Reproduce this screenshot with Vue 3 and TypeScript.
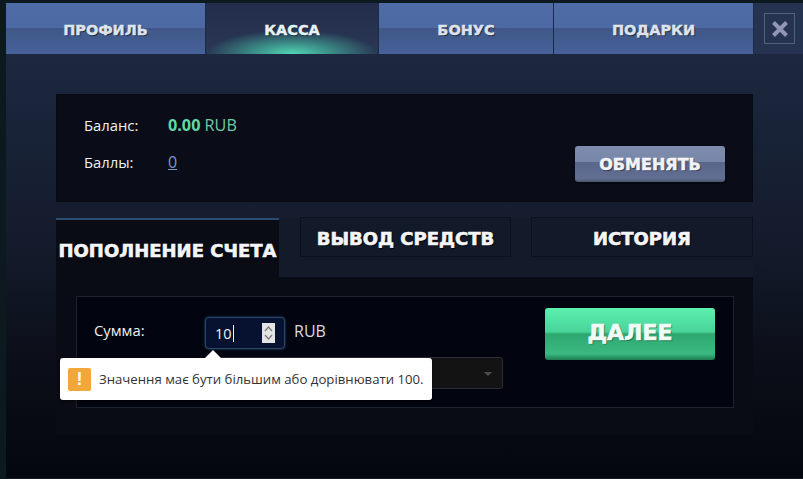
<template>
  <div class="page">
    <header class="top">
      <nav class="tabs">
        <div
          v-for="tab in mainTabs"
          :key="tab.label"
          :class="['tab', { active: tab.active }]"
          :style="{ width: tab.width + 'px' }"
        >
          {{ tab.label }}
        </div>
      </nav>
      <button class="close" type="button" aria-label="Закрыть">
        <svg width="20" height="20" viewBox="0 0 20 20">
          <path d="M3.5 3.5 16.5 16.5M16.5 3.5 3.5 16.5" stroke="#9196b4" stroke-width="4" fill="none" />
        </svg>
      </button>
    </header>

    <main class="body">
      <section class="balance">
        <div class="balance-grid">
          <span class="label">Баланс:</span>
          <span class="amount"><b>0.00</b> RUB</span>
          <span class="label">Баллы:</span>
          <a class="points">0</a>
        </div>
        <button class="exchange" type="button"><span>ОБМЕНЯТЬ</span></button>
      </section>

      <div class="subtabs">
        <div class="subtab current">ПОПОЛНЕНИЕ СЧЕТА</div>
        <div class="subtab first">ВЫВОД СРЕДСТВ</div>
        <div class="subtab second">ИСТОРИЯ</div>
      </div>

      <section class="panel">
        <div class="form">
          <div class="fields">
            <div class="row">
              <span class="label field-label">Сумма:</span>
              <div class="input">
                <span class="value">10</span><span class="caret"></span>
                <span class="spinner">
                  <svg width="13" height="20" viewBox="0 0 13 20">
                    <path d="M3 8 6.5 4 10 8M3 12 6.5 16 10 12" stroke="#7a7a7a" stroke-width="1.2" fill="none" />
                  </svg>
                </span>
              </div>
              <span class="currency">RUB</span>
            </div>
            <div class="select"><span class="arrow"></span></div>
          </div>
          <button class="next" type="button"><span>ДАЛЕЕ</span></button>

          <div class="tooltip">
            <span class="tip-arrow"></span>
            <span class="warn">!</span>
            <span class="tip-text">Значення має бути більшим або дорівнювати 100.</span>
          </div>
        </div>
      </section>
    </main>
  </div>
</template>

<script setup lang="ts">
const mainTabs = [
  { label: "ПРОФИЛЬ", width: 200, active: false },
  { label: "КАССА", width: 173, active: true },
  { label: "БОНУС", width: 175, active: false },
  { label: "ПОДАРКИ", width: 200, active: false },
];
</script>

<style>
html,
body {
  margin: 0;
  background: #0a1216;
  overflow: hidden;
}
</style>

<style scoped>
.page {
  width: 803px;
  height: 479px;
  box-sizing: border-box;
  padding-top: 3px;
  font-family: "Liberation Sans", Arial, sans-serif;
  color: #e8ebf2;
  background: #0c1a1f;
  overflow: hidden;
}

.top {
  display: flex;
  height: 51px;
  padding-left: 6px;
  background: linear-gradient(90deg, #0c1a1f 6px, #263350 6px);
}

.tabs {
  display: flex;
  background: #1c2740;
}

.tab {
  box-sizing: border-box;
  display: flex;
  align-items: center;
  justify-content: center;
  border-right: 1px solid #1d2a45;
  background: linear-gradient(#4f6ca7 0, #4d69a3 50%, #3f5888 50%, #47619a 100%);
  font-family: "DejaVu Sans", sans-serif;
  font-size: 14.5px;
  font-weight: 700;
  -webkit-text-stroke: 0.4px currentColor;
  color: #dfe3ee;
  text-shadow: 1px 1px 1px #1b2338;
  padding-top: 2px;
}

.tab.active {
  color: #e6f4f6;
  background:
    radial-gradient(ellipse 86px 24px at 50% 100%, #52d8b4 0, rgba(70, 190, 165, 0.7) 40%, rgba(50, 120, 120, 0) 100%),
    linear-gradient(#222d4b, #2a3754);
}

.close {
  box-sizing: border-box;
  width: 31px;
  height: 31px;
  margin: 10px 0 0 10px;
  padding: 0;
  display: flex;
  align-items: center;
  justify-content: center;
  background: transparent;
  border: 1px solid #565f7e;
}

.body {
  height: 425px;
  box-sizing: border-box;
  margin-left: 6px;
  padding: 40px 50px 0 50px;
  background: linear-gradient(#1d2740 0, #182236 90px, #131a2a 200px, #0c0f1a 300px, #05070e 420px);
  border-bottom: 1px solid #15181f;
}

.balance {
  box-sizing: border-box;
  height: 108px;
  display: flex;
  justify-content: space-between;
  padding: 11px 27px 0;
  background: #0a0d17;
  border: 1px solid #090b12;
}

.balance-grid {
  display: grid;
  grid-template-columns: 84px auto;
  grid-auto-rows: 37px;
  align-items: center;
  align-content: start;
}

.label {
  font-family: "Open Sans", sans-serif;
  font-size: 14.8px;
  color: #eef0f4;
}

.amount {
  color: #6fc9a6;
  font-family: "Open Sans", sans-serif;
  font-size: 16.2px;
}

.amount b {
  color: #63d7a6;
}

.points {
  color: #7f95c8;
  font-family: "Open Sans", sans-serif;
  font-size: 16px;
  text-decoration: underline;
}

.exchange {
  box-sizing: border-box;
  width: 150px;
  height: 36px;
  margin-top: 40px;
  padding: 0;
  border: 0;
  border-radius: 3px;
  background: linear-gradient(#7e8bad 0, #7887a9 44%, #586688 44%, #626f94 90%, #4b5570 100%);
  box-shadow: 0 1px 2px rgba(0, 0, 0, 0.6);
  font-family: "DejaVu Sans", sans-serif;
  font-size: 16px;
  font-weight: 700;
  -webkit-text-stroke: 0.5px currentColor;
  color: #f2f4f8;
  text-shadow: 1px 1px 1px #2a3045;
}

.subtabs {
  display: flex;
  height: 59px;
  margin-top: 16px;
  background: #131a2a;
}

.subtab {
  box-sizing: border-box;
  font-family: "DejaVu Sans", sans-serif;
  font-weight: 700;
  font-size: 18px;
  -webkit-text-stroke: 0.6px currentColor;
  color: #f4f5f8;
  text-shadow: 1px 1px 1px #000;
  display: flex;
  align-items: center;
  justify-content: center;
  white-space: nowrap;
}

.subtab.current {
  width: 223px;
  padding-top: 3px;
  border-top: 2px solid #2b4b72;
  background: #0a0c15;
}

.subtab.first,
.subtab.second {
  height: 40px;
  margin-top: -1px;
  padding-top: 2px;
  background: #121929;
  border: 1px solid #0c1120;
}

.subtab.first {
  width: 211px;
  margin-left: 21px;
}

.subtab.second {
  width: 222px;
  margin-left: 20px;
}

.panel {
  height: 158px;
  box-sizing: border-box;
  padding: 19px 19px 27px 20px;
  background: #0a0c15;
}

.form {
  position: relative;
  box-sizing: border-box;
  height: 112px;
  display: flex;
  justify-content: space-between;
  padding: 11px 18px 0 17px;
  background: #02040f;
  border: 1px solid #1d2231;
}

.fields {
  padding-top: 9px;
}

.row {
  display: flex;
  align-items: center;
  height: 32px;
}

.field-label {
  width: 111px;
  margin-top: -7px;
}

.input {
  box-sizing: border-box;
  width: 80px;
  height: 32px;
  display: flex;
  align-items: center;
  padding: 0 9px;
  background: #061230;
  border: 1px solid #2a4668;
  border-radius: 4px;
  box-shadow: 0 0 3px rgba(70, 120, 170, 0.6);
  font-family: "Open Sans", sans-serif;
  font-size: 14.5px;
  color: #eef1f6;
}

.caret {
  width: 1px;
  height: 17px;
  margin-left: 1px;
  background: #eef1f6;
}

.spinner {
  display: block;
  width: 13px;
  height: 20px;
  margin-left: auto;
  background: #e4e4e4;
}

.spinner svg {
  display: block;
}

.currency {
  margin-left: 9px;
  margin-top: -5px;
  font-family: "Open Sans", sans-serif;
  font-size: 16px;
  color: #d8dbe4;
}

.select {
  box-sizing: border-box;
  position: relative;
  width: 298px;
  height: 32px;
  margin: 8px 0 0 111px;
  background: #141313;
  border: 1px solid #2a2d38;
  border-radius: 3px;
}

.arrow {
  position: absolute;
  right: 10px;
  top: 14px;
  border: 4px solid transparent;
  border-top-color: #4e4e52;
}

.next {
  box-sizing: border-box;
  width: 170px;
  height: 52px;
  padding: 0 0 4px;
  border: 0;
  border-radius: 3px;
  background: linear-gradient(#5cf0b0 0, #49d399 46%, #2ea76f 50%, #3bb982 88%, #1e7a50 100%);
  font-family: "DejaVu Sans", sans-serif;
  font-size: 22px;
  font-weight: 700;
  -webkit-text-stroke: 0.7px currentColor;
  color: #f0fbf6;
  text-shadow: 1px 1px 1px #15603f;
}

.tooltip {
  position: absolute;
  left: -17px;
  top: 61px;
  box-sizing: border-box;
  width: 372px;
  height: 42px;
  display: flex;
  align-items: center;
  gap: 8px;
  padding: 0 8px;
  background: #fff;
  border-radius: 3px;
  box-shadow: 0 1px 3px rgba(0, 0, 0, 0.5);
}

.tip-arrow {
  position: absolute;
  left: 145px;
  top: -8px;
  border: 8px solid transparent;
  border-top: 0;
  border-bottom-color: #fff;
}

.warn {
  flex: none;
  width: 23px;
  height: 23px;
  display: flex;
  align-items: center;
  justify-content: center;
  background: #f2a73a;
  border-radius: 2px;
  font-family: "Liberation Sans", sans-serif;
  font-weight: 700;
  font-size: 18px;
  color: #fff;
}

.tip-text {
  font-family: "Open Sans", sans-serif;
  font-size: 13.2px;
  color: #333;
  white-space: nowrap;
}
</style>
